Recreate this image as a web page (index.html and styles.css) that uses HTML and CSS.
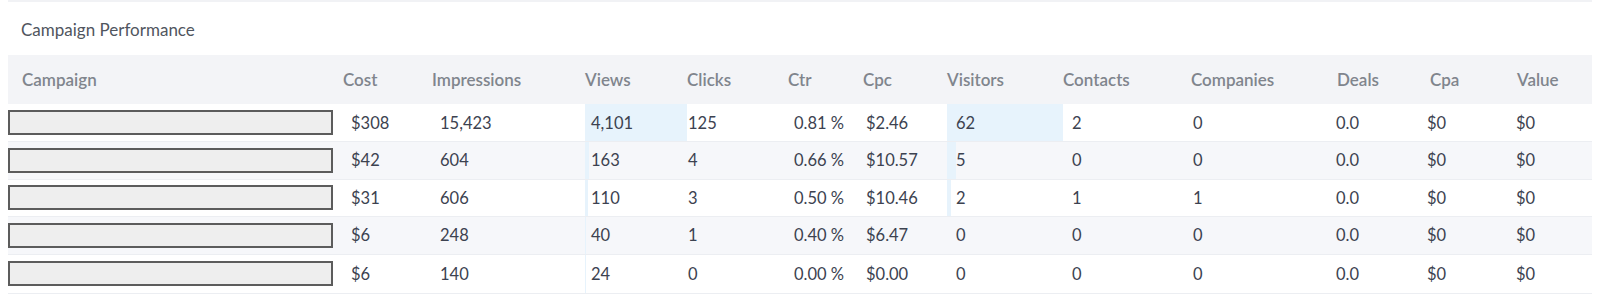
FILE: index.html
```html
<!DOCTYPE html>
<html>
<head>
<meta charset="utf-8">
<link rel="stylesheet" href="styles.css">
</head>
<body>
<div class="topstrip"></div>
<h2 class="title">Campaign Performance</h2>
<table class="perf">
  <colgroup>
    <col class="w-campaign"><col class="w-cost"><col class="w-impr"><col class="w-views"><col class="w-clicks"><col class="w-ctr"><col class="w-cpc"><col class="w-visitors"><col class="w-contacts"><col class="w-companies"><col class="w-deals"><col class="w-cpa"><col class="w-value">
  </colgroup>
  <thead>
    <tr>
      <th class="c-campaign">Campaign</th>
      <th class="c-cost">Cost</th>
      <th class="c-impr">Impressions</th>
      <th class="c-views">Views</th>
      <th class="c-clicks">Clicks</th>
      <th class="c-ctr">Ctr</th>
      <th class="c-cpc">Cpc</th>
      <th class="c-visitors">Visitors</th>
      <th class="c-contacts">Contacts</th>
      <th class="c-companies">Companies</th>
      <th class="c-deals">Deals</th>
      <th class="c-cpa">Cpa</th>
      <th class="c-value">Value</th>
    </tr>
  </thead>
  <tbody>
    <tr>
      <td class="c-campaign"><div class="name-box"></div></td>
      <td class="c-cost">$308</td>
      <td class="c-impr">15,423</td>
      <td class="c-views bar" style="--pct:100%">4,101</td>
      <td class="c-clicks">125</td>
      <td class="c-ctr">0.81 %</td>
      <td class="c-cpc">$2.46</td>
      <td class="c-visitors bar" style="--pct:100%">62</td>
      <td class="c-contacts">2</td>
      <td class="c-companies">0</td>
      <td class="c-deals">0.0</td>
      <td class="c-cpa">$0</td>
      <td class="c-value">$0</td>
    </tr>
    <tr>
      <td class="c-campaign"><div class="name-box"></div></td>
      <td class="c-cost">$42</td>
      <td class="c-impr">604</td>
      <td class="c-views bar" style="--pct:3.97%">163</td>
      <td class="c-clicks">4</td>
      <td class="c-ctr">0.66 %</td>
      <td class="c-cpc">$10.57</td>
      <td class="c-visitors bar" style="--pct:8.06%">5</td>
      <td class="c-contacts">0</td>
      <td class="c-companies">0</td>
      <td class="c-deals">0.0</td>
      <td class="c-cpa">$0</td>
      <td class="c-value">$0</td>
    </tr>
    <tr>
      <td class="c-campaign"><div class="name-box"></div></td>
      <td class="c-cost">$31</td>
      <td class="c-impr">606</td>
      <td class="c-views bar" style="--pct:2.68%">110</td>
      <td class="c-clicks">3</td>
      <td class="c-ctr">0.50 %</td>
      <td class="c-cpc">$10.46</td>
      <td class="c-visitors bar" style="--pct:3.23%">2</td>
      <td class="c-contacts">1</td>
      <td class="c-companies">1</td>
      <td class="c-deals">0.0</td>
      <td class="c-cpa">$0</td>
      <td class="c-value">$0</td>
    </tr>
    <tr>
      <td class="c-campaign"><div class="name-box"></div></td>
      <td class="c-cost">$6</td>
      <td class="c-impr">248</td>
      <td class="c-views bar" style="--pct:0.98%">40</td>
      <td class="c-clicks">1</td>
      <td class="c-ctr">0.40 %</td>
      <td class="c-cpc">$6.47</td>
      <td class="c-visitors bar" style="--pct:0%">0</td>
      <td class="c-contacts">0</td>
      <td class="c-companies">0</td>
      <td class="c-deals">0.0</td>
      <td class="c-cpa">$0</td>
      <td class="c-value">$0</td>
    </tr>
    <tr>
      <td class="c-campaign"><div class="name-box"></div></td>
      <td class="c-cost">$6</td>
      <td class="c-impr">140</td>
      <td class="c-views bar" style="--pct:0.59%">24</td>
      <td class="c-clicks">0</td>
      <td class="c-ctr">0.00 %</td>
      <td class="c-cpc">$0.00</td>
      <td class="c-visitors bar" style="--pct:0%">0</td>
      <td class="c-contacts">0</td>
      <td class="c-companies">0</td>
      <td class="c-deals">0.0</td>
      <td class="c-cpa">$0</td>
      <td class="c-value">$0</td>
    </tr>
  </tbody>
</table>
</body>
</html>
```
FILE: styles.css
```css
html, body {
  background: #ffffff;
}
body {
  margin: 0 8px;
  font-family: Lato, "Noto Sans", sans-serif;
  color: #3c4250;
}
.topstrip {
  height: 2px;
  background: #f1f2f5;
}
.title {
  margin: 18px 0 0 13px;
  font-size: 17px;
  line-height: 20px;
  font-weight: 400;
  color: #50555e;
  height: 35px;
}
.perf {
  width: 1584px;
  table-layout: fixed;
  border-collapse: collapse;
  border-spacing: 0;
}
.w-campaign { width: 335px; }
.w-cost { width: 89px; }
.w-impr { width: 153px; }
.w-views { width: 102px; }
.w-clicks { width: 101px; }
.w-ctr { width: 75px; }
.w-cpc { width: 84px; }
.w-visitors { width: 116px; }
.w-contacts { width: 128px; }
.w-companies { width: 145px; }
.w-deals { width: 91px; }
.w-cpa { width: 89px; }
.w-value { width: 76px; }

.perf thead tr {
  background: #f3f4f7;
  height: 49px;
}
.perf th {
  text-align: left;
  font-weight: 600;
  font-size: 17px;
  color: #80858d;
  padding: 0;
  white-space: nowrap;
}
.perf th.c-campaign { padding-left: 14px; }
.perf th.c-deals { padding-left: 1px; }
.perf th.c-cpa { padding-left: 3px; }
.perf th.c-value { padding-left: 1px; }

.perf tbody tr {
  height: 37.5px;
  border-bottom: 1px solid #eceef2;
}
.perf tbody tr:last-child {
  height: 39.5px;
}
.perf tbody tr:nth-child(even) {
  background: #f6f7fa;
}
.perf td {
  font-size: 16.5px;
  color: #3c4250;
  padding: 0;
  white-space: nowrap;
  vertical-align: middle;
}
.perf td.c-cost { padding-left: 8px; }
.perf td.c-impr { padding-left: 8px; }
.perf td.c-views { padding-left: 6px; }
.perf td.c-clicks { padding-left: 1px; }
.perf td.c-ctr { padding-left: 6px; }
.perf td.c-cpc { padding-left: 3px; }
.perf td.c-visitors { padding-left: 9px; }
.perf td.c-contacts { padding-left: 9px; }
.perf td.c-companies { padding-left: 2px; }

.perf td.bar {
  background-image: linear-gradient(to right, #e7f3fc var(--pct), transparent var(--pct));
}

.name-box {
  width: 321px;
  height: 21px;
  border: 2px solid #5c5c5c;
  background: #eeeeee;
}
```
